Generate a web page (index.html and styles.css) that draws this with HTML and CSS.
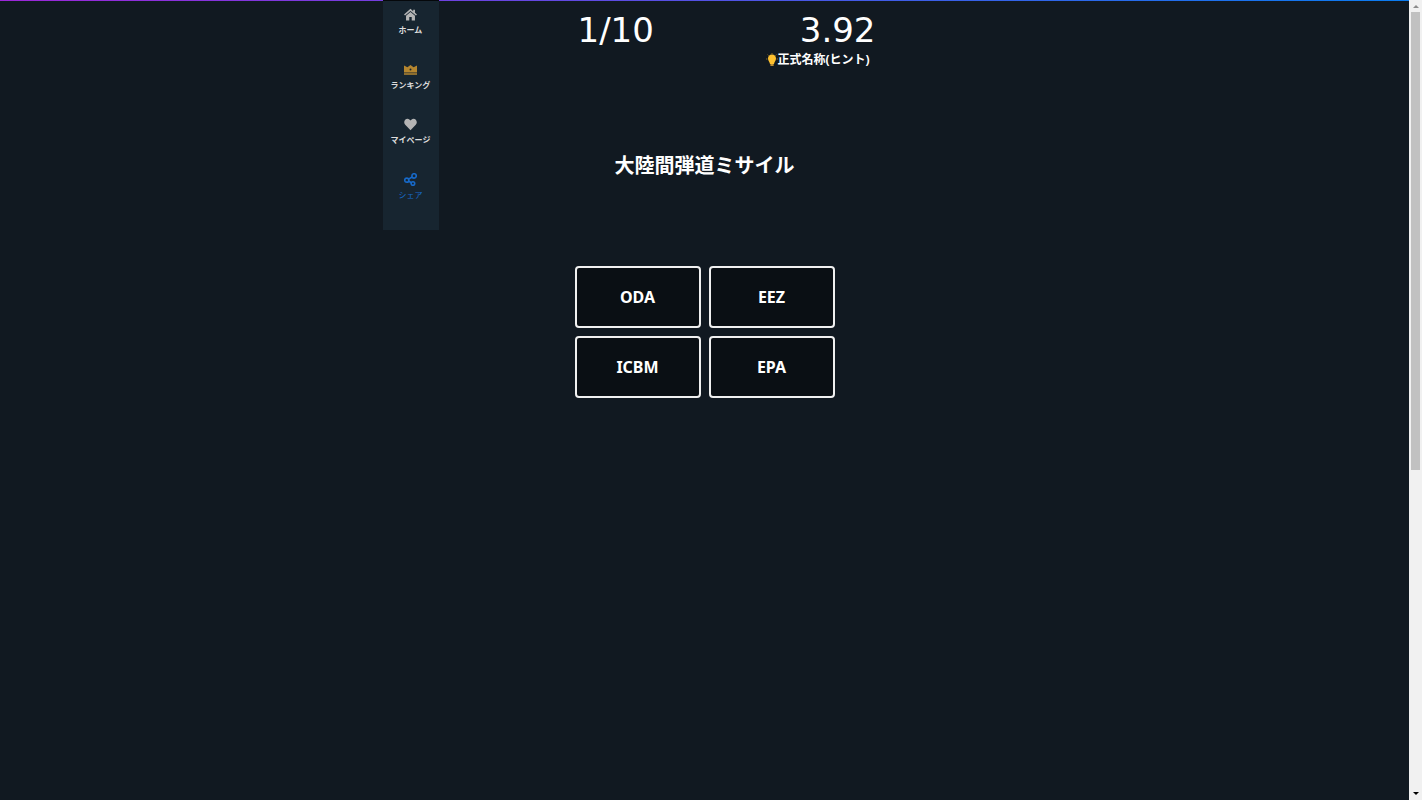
FILE: index.html
```html
<!DOCTYPE html>
<html lang="ja">
<head>
    <meta charset="UTF-8">
    <meta name="viewport" content="width=device-width, initial-scale=1.0">
    <title>略語クイズ</title>
    <link rel="stylesheet" href="styles.css">
</head>
<body>

    <div class="page">
        <div class="container">
            <!-- Side menu -->
            <nav class="menu">
                <a href="#home">
                    <svg viewBox="0 0 16 16"><path d="M8 1 L0 8 L1.3 9.3 L8 3.6 L14.7 9.3 L16 8 L13.5 5.8 V2 H11.3 V3.9 Z M8 4.8 L2.5 9.5 V15.5 H6.5 V11 H9.5 V15.5 H13.5 V9.5 Z"/></svg>
                    ホーム
                </a>
                <a href="#ranking" class="ranking">
                    <svg viewBox="0 0 16 16"><path d="M0 3 L4.2 5.2 L8 2.5 L11.8 5.2 L16 3 V11.8 H0 Z M0 12.5 H16 V14.5 H0 Z"/><circle cx="8" cy="8" r="1.2" class="jewel"/></svg>
                    ランキング
                </a>
                <a href="#mypage">
                    <svg viewBox="0 0 16 16"><path d="M8 15 L1.5 8.4 C-2 4.5 2.5 -1.2 7 2 L8 3 L9 2 C13.5 -1.2 18 4.5 14.5 8.4 Z"/></svg>
                    マイページ
                </a>
                <a href="#share" class="share">
                    <svg viewBox="0 0 16 16"><g class="line"><circle cx="3.4" cy="8.8" r="2.5"/><circle cx="12.4" cy="3.6" r="2.7"/><circle cx="11" cy="13" r="2.2"/><path d="M5.6 7.5 L10 5 M5.6 9.9 L9 12"/></g></svg>
                    シェア
                </a>
            </nav>

            <!-- Quiz -->
            <main class="quiz">
                <div class="status">
                    <div class="count">1/10</div>
                    <div class="time">3.92</div>
                </div>
                <div class="hint">
                    <svg viewBox="0 0 12 14"><path class="rays" d="M0 6 H1.4 M10.6 6 H12 M1.6 1.6 L2.6 2.6 M10.4 1.6 L9.4 2.6 M6 0 V1"/><path class="bulb" d="M6 1.4 C8.6 1.4 10 3.3 10 5.5 C10 7.8 8.4 8.5 8 11 H4 C3.6 8.5 2 7.8 2 5.5 C2 3.3 3.4 1.4 6 1.4 Z"/><path class="base" d="M4.4 11 H7.6 V13 H4.4 Z"/></svg>
                    <span>正式名称(ヒント)</span>
                </div>
                <h1>大陸間弾道ミサイル</h1>
                <div class="answers">
                    <button type="button">ODA</button>
                    <button type="button">EEZ</button>
                    <button type="button">ICBM</button>
                    <button type="button">EPA</button>
                </div>
            </main>
        </div>
    </div>

    <!-- Scroll bar -->
    <div class="scrollbar">
        <svg viewBox="0 0 12 12"><path d="M3 8 L6 5 L9 8 Z" class="up"/></svg>
        <div class="track"><div class="thumb"></div></div>
        <svg viewBox="0 0 12 12"><path d="M3 4 L6 7 L9 4 Z"/></svg>
    </div>

</body>
</html>
```
FILE: styles.css
```css
* {
    box-sizing: border-box;
}
body {
    display: flex;
    min-height: 100vh;
    margin: 0;
    background-color: #111921;
    color: #fff;
    font-family: "Noto Sans", "Noto Sans CJK JP", sans-serif;
}
.page {
    flex: 1;
    background: linear-gradient(to right, #9c27d8, #0a7cf0) top / 100% 1px no-repeat;
}
.container {
    display: grid;
    grid-template-columns: 56px 1fr 56px;
    align-items: start;
    max-width: 644px;
    margin: 0 auto;
}

/* Side menu */
.menu {
    padding: 7px 0 2px;
    background-color: #172530;
    border-top: 1px solid #05080b;
}
.menu a {
    display: flex;
    flex-direction: column;
    align-items: center;
    gap: 2px;
    height: 55px;
    color: #ddd;
    font-size: 8px;
    line-height: 14px;
    font-weight: bold;
    text-decoration: none;
    white-space: nowrap;
}
.menu svg {
    width: 13px;
    height: 13px;
    fill: #b4b4b4;
}
.menu .ranking svg {
    fill: #b5862f;
}
.menu .jewel {
    fill: #172530;
}
.menu .share {
    color: #1769c8;
    font-weight: normal;
}
.line {
    fill: none;
    stroke: #1769c8;
    stroke-width: 2;
}

/* Quiz */
.quiz {
    display: flex;
    flex-direction: column;
    align-items: center;
}
.status {
    display: flex;
    justify-content: space-between;
    width: 100%;
    padding: 9px 95px 0 139px;
    font-family: "DejaVu Sans", sans-serif;
    font-size: 34px;
    line-height: 43px;
}
.hint {
    display: flex;
    align-items: center;
    width: 100%;
    padding-left: 327px;
    font-size: 12px;
    line-height: 16px;
    font-weight: bold;
    white-space: nowrap;
}
.hint svg {
    width: 12px;
    height: 14px;
}
.bulb {
    fill: #fdc02f;
}
.base {
    fill: #b98d35;
}
.rays {
    stroke: #8a6c27;
}
h1 {
    margin: 80px 0 82px;
    font-size: 20px;
    line-height: 36px;
}
.answers {
    display: grid;
    grid-template-columns: 126px 126px;
    gap: 8px;
}
.answers button {
    height: 62px;
    padding: 0;
    border: 2px solid #f0f0f0;
    border-radius: 4px;
    background-color: #0a0f14;
    color: #fff;
    font-family: inherit;
    font-size: 16px;
    font-weight: bold;
}

/* Scroll bar */
.scrollbar {
    display: flex;
    flex-direction: column;
    width: 13px;
    height: 100vh;
    padding: 0 1px;
    background-color: #f1f1f1;
}
.scrollbar svg {
    width: 12px;
    height: 12px;
}
.scrollbar .up {
    fill: #8c8c8c;
}
.track {
    flex: 1;
    padding: 0 1px;
}
.thumb {
    height: 59%;
    background-color: #c1c1c1;
}
```
